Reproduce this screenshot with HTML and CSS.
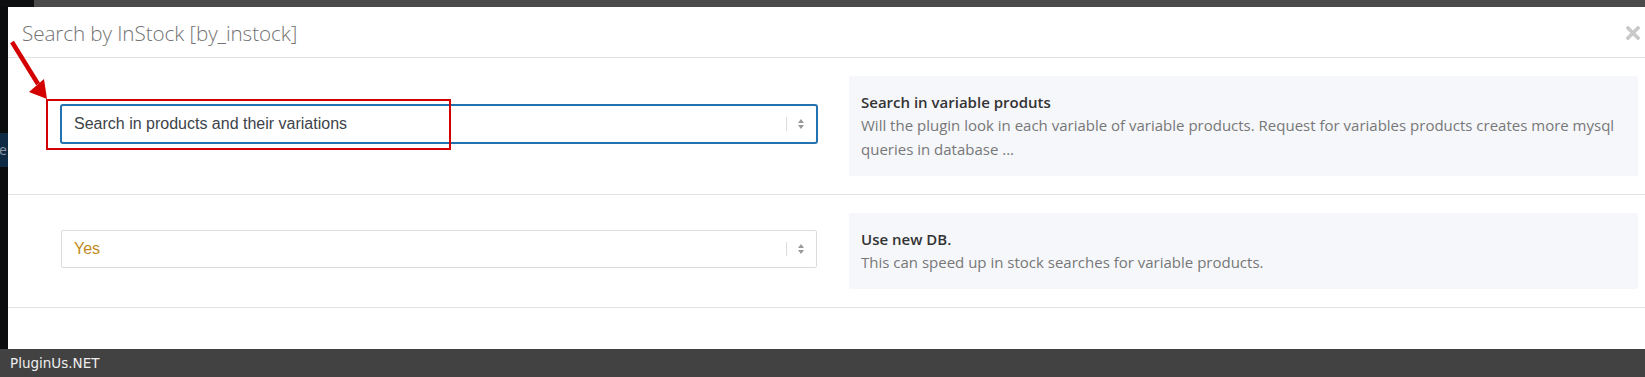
FILE: index.html
```html
<!DOCTYPE html>
<html lang="en">
<head>
  <meta charset="UTF-8" />
  <title>Search by InStock</title>
  <link rel="stylesheet" href="styles.css">
</head>
<body>
  <!-- Top admin strip -->
  <div class="topbar"><span class="topbar-left"></span></div>

  <div class="stage">
    <!-- Page behind the modal -->
    <aside class="backdrop">
      <div class="backdrop-item">e</div>
    </aside>

    <!-- Modal -->
    <div class="modal">
      <div class="modal-header">
        <h3>Search by InStock [by_instock]</h3>
        <span class="modal-close">
          <svg width="14" height="14" viewBox="0 0 14 14"><path d="M2 2 L12 12 M12 2 L2 12" stroke="#c9c9c9" stroke-width="3.6" stroke-linecap="square"/></svg>
        </span>
      </div>

      <div class="option-row">
        <div class="option-field">
          <div class="select focused">
            <span class="select-value">Search in products and their variations</span>
            <span class="select-arrows"></span>
          </div>
        </div>
        <div class="option-info">
          <h4>Search in variable produts</h4>
          <p>Will the plugin look in each variable of variable products. Request for variables products creates more mysql queries in database ...</p>
        </div>
      </div>

      <div class="option-row">
        <div class="option-field">
          <div class="select">
            <span class="select-value yes">Yes</span>
            <span class="select-arrows"></span>
          </div>
        </div>
        <div class="option-info">
          <h4>Use new DB.</h4>
          <p>This can speed up in stock searches for variable products.</p>
        </div>
      </div>
    </div>
  </div>

  <footer class="statusbar">PluginUs.NET</footer>

  <!-- Screenshot annotation -->
  <div class="callout-box"></div>
  <svg class="callout-arrow" width="50" height="70" viewBox="0 0 50 70">
    <line x1="12" y1="12" x2="38" y2="54" stroke="#d40000" stroke-width="4.5"/>
    <polygon points="47,69 29,62 44,49" fill="#d40000"/>
  </svg>
</body>
</html>
```

FILE: styles.css
```css
/* Global */
* { box-sizing: border-box; margin: 0; padding: 0; }
body {
  width: 1645px;
  height: 377px;
  overflow: hidden;
  background: #ffffff;
  font-family: 'Open Sans', 'Liberation Sans', sans-serif;
  position: relative;
}
/* Top strip */
.topbar {
  height: 7px;
  background: #4b4b4b;
  display: flex;
}
.topbar-left {
  width: 34px;
  background: #0d0f11;
}
/* Stage: backdrop + modal */
.stage {
  display: flex;
  height: 342px;
}
.backdrop {
  width: 8px;
  background: #0b0c0e;
  overflow: hidden;
  padding-top: 126px;
}
.backdrop-item {
  height: 34px;
  background: #0f2a45;
  color: #8a96a3;
  font-size: 14px;
  line-height: 34px;
  text-indent: -1px;
}
.modal {
  flex: 1;
  background: #ffffff;
}
.modal-header {
  height: 51px;
  border-bottom: 1px solid #e3e3e3;
  display: flex;
  align-items: center;
  justify-content: space-between;
  padding: 0 5px 0 14px;
}
.modal-header h3 {
  font-weight: 300;
  font-size: 20.7px;
  color: #737373;
  letter-spacing: -0.1px;
  padding-top: 2px;
}
.modal-close {
  display: flex;
  margin-top: 2px;
}
/* Option rows */
.option-row {
  display: grid;
  grid-template-columns: 756px 789px;
  column-gap: 32px;
  padding: 18px 7px 18px 53px;
  border-bottom: 1px solid #e3e3e3;
  align-items: center;
}
.option-field {
  margin-bottom: 4px;
}
.select {
  height: 38px;
  border: 1px solid #dcdcde;
  border-radius: 2px;
  display: flex;
  align-items: center;
  padding-left: 12px;
  font-family: 'Liberation Sans', Arial, sans-serif;
  font-size: 16px;
  color: #3c434a;
  background: #fff;
}
.select.focused {
  border-color: #2271b1;
  box-shadow: 0 0 0 1px #2271b1;
}
.select-value {
  flex: 1;
}
.select-value.yes {
  color: #c08a1c;
}
.select-arrows {
  width: 30px;
  height: 14px;
  border-left: 1px solid #dddddd;
  position: relative;
}
.select-arrows::before,
.select-arrows::after {
  content: "";
  position: absolute;
  left: 11px;
  border-left: 3px solid transparent;
  border-right: 3px solid transparent;
}
.select-arrows::before {
  top: 2px;
  border-bottom: 4px solid #999;
}
.select-arrows::after {
  top: 8px;
  border-top: 4px solid #999;
}
/* Description box */
.option-info {
  background: #f6f7fb;
  border-radius: 2px;
  padding: 15px 12px 15px;
}
.option-info h4 {
  font-size: 15px;
  font-weight: 600;
  color: #333;
  line-height: 22px;
}
.option-info p {
  font-size: 15px;
  color: #777;
  line-height: 24px;
}
/* Bottom status bar */
.statusbar {
  height: 28px;
  background: #424242;
  color: #eeeeee;
  font-family: 'DejaVu Sans', sans-serif;
  font-size: 13.5px;
  line-height: 28px;
  padding-left: 10px;
}
/* Annotation overlay */
.callout-box {
  position: absolute;
  left: 46px;
  top: 99px;
  width: 405px;
  height: 51px;
  border: 2px solid #d40000;
}
.callout-arrow {
  position: absolute;
  left: 0;
  top: 30px;
}
```
